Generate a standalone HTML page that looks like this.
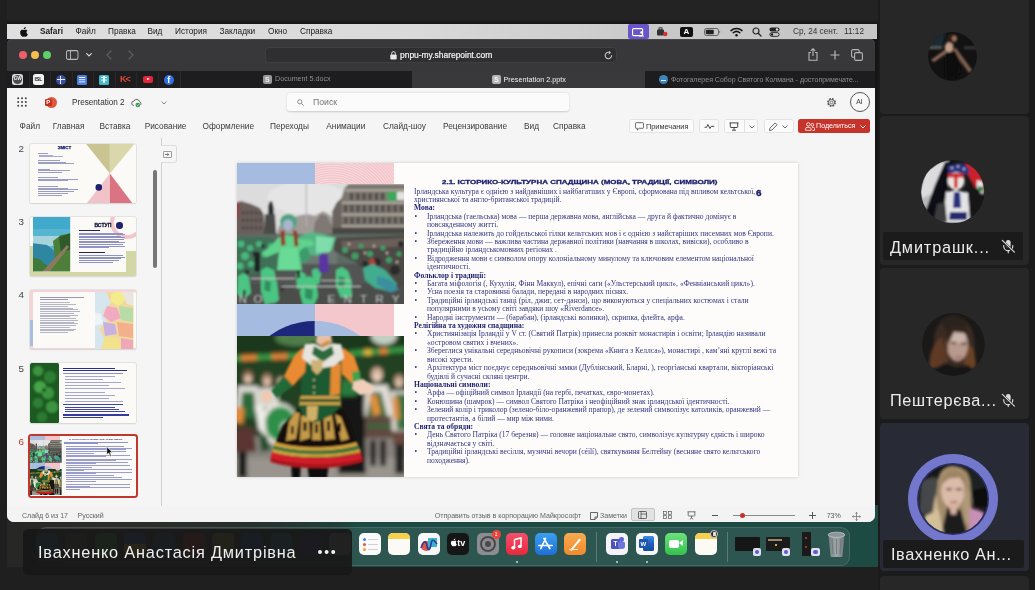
<!DOCTYPE html>
<html lang="uk">
<head>
<meta charset="utf-8">
<title>Presentation 2.pptx</title>
<style>
*{box-sizing:border-box;margin:0;padding:0}
html,body{width:1035px;height:590px;overflow:hidden;background:#1f1f1f}
body{font-family:"Liberation Sans",sans-serif;position:relative}
.a{position:absolute}
.t{position:absolute;white-space:nowrap;line-height:1}
#share{will-change:transform;border-radius:.01px}
/* ---------- shared screen ---------- */
#share{left:7px;top:0;width:871px;height:567px;background:#151515;overflow:hidden}
#menubar{left:0;top:24px;width:870px;height:14.600px;background:linear-gradient(90deg,#dfdfdf 0,#dadada 45%,#c9c9c9 75%,#c6c6c6 100%)}
#menubar .t{font-size:8.250px;color:#1a1a1a;top:4.200px}
#toolbar{left:0;top:39px;width:868px;height:32px;background:#38383a;box-shadow:inset 0 1px 0 #47474a;border-radius:5px 5px 0 0}
#tabs{left:0;top:71px;width:868px;height:17px;background:#1d1d1f}
#ppt{z-index:2;left:0;top:88px;width:868px;height:434px;background:#f5f5f5;border-radius:0 0 7px 7px;overflow:hidden}
#desk{left:0;top:505px;width:871px;height:62px;background:linear-gradient(90deg,#262624 0,#2a2b28 60px,#27302c 240px,#1f3f3a 330px,#1e4a44 352px,#1e4a44 100%)}
#desk>*{margin-top:17px}
.rt{font-size:8.300px;color:#3b3b3b}
.btn{top:31.400px;height:13.300px;background:#fbfbfb;border:1px solid #e3e3e3;border-radius:2.500px}
.sn{left:11.500px;font-size:9.800px;color:#444}
.st{top:424px;font-size:7.050px;color:#666}
.th{position:absolute;left:23.400px;width:106px;height:59.700px;background:#fbfaf6;overflow:hidden;box-shadow:0 0 0 .6px #d8d8d8,0 .5px 1.500px rgba(0,0,0,.12);border-radius:1.500px}
/* ---------- slide text ---------- */
#slide{left:230px;top:75px;width:560.500px;height:314px;background:#fdfcfb;box-shadow:0 0 3px rgba(0,0,0,.18);overflow:hidden}
.ln{position:absolute;left:177px;white-space:nowrap;font-family:"Liberation Serif",serif;font-size:7.57px;line-height:8.41px;color:#33367f}
.ln b{color:#1c1f6e}
.bl,.cl{left:190px}
.bl:before{content:"•";position:absolute;left:-12.500px}
/* ---------- right panel ---------- */
.tile{position:absolute;left:880px;width:148.800px;background:#272727;border-radius:4px}
.nm{position:absolute;white-space:nowrap;color:#ededed;font-size:16.300px;letter-spacing:.6px;line-height:1;will-change:transform}
.di{position:absolute;top:10.800px;width:22px;height:22px;border-radius:5px;overflow:hidden}
i.a{display:block}
</style>
</head>
<body>

<!-- ================= SHARED SCREEN ================= -->
<div id="share" class="a">
  <div class="a" style="left:0;top:0;width:871px;height:24px;background:linear-gradient(#232323 0,#232323 19px,#171717 23px)"></div>

  <!-- macOS menu bar -->
  <div id="menubar" class="a">
    <svg class="a" style="left:12px;top:2.5px" width="9" height="10" viewBox="0 0 18 20"><path d="M12.6 3.2c.8-1 1.3-2.300 1.200-3.200-1.100.1-2.500.8-3.300 1.700-.7.800-1.400 2.100-1.200 3.300 1.300.1 2.500-.700 3.300-1.800zM15 10.600c0-2.300 1.900-3.400 2-3.500-1.100-1.600-2.800-1.800-3.400-1.800-1.400-.2-2.800.800-3.500.800-.8 0-1.900-.800-3.100-.800-1.600 0-3.100.900-3.900 2.400-1.700 2.900-.4 7.200 1.200 9.500.800 1.200 1.700 2.500 3 2.400 1.200 0 1.700-.800 3.100-.800 1.500 0 1.900.800 3.100.700 1.300 0 2.100-1.100 2.900-2.300.900-1.300 1.300-2.600 1.300-2.700-.100 0-2.600-1-2.700-3.900z" fill="#111"/></svg>
    <span class="t" style="left:33px;font-weight:bold">Safari</span>
    <span class="t" style="left:68.5px">Файл</span>
    <span class="t" style="left:101px">Правка</span>
    <span class="t" style="left:140.500px">Вид</span>
    <span class="t" style="left:168px">История</span>
    <span class="t" style="left:212.500px">Закладки</span>
    <span class="t" style="left:261px">Окно</span>
    <span class="t" style="left:293px">Справка</span>
    <!-- right status items -->
    <div class="a" style="left:621px;top:0;width:21px;height:15px;background:#6a55c8;border-radius:2px"></div>
    <svg class="a" style="left:625px;top:3.5px" width="13" height="9" viewBox="0 0 13 9"><rect x=".6" y=".6" width="10" height="7" rx="1" fill="none" stroke="#fff" stroke-width="1.100"/><circle cx="9.5" cy="4.5" r="1.300" fill="#fff"/><path d="M7 8.500c0-2 5-2 5 0z" fill="#fff"/></svg>
    <svg class="a" style="left:649px;top:3px" width="12" height="10" viewBox="0 0 12 10"><rect x="1" y="2.500" width="7" height="6" rx="1" fill="#333"/><rect x="3" y=".8" width="3" height="2" fill="none" stroke="#333" stroke-width=".9"/><circle cx="9.300" cy="7" r="2.200" fill="#d8332f"/></svg>
    <div class="a" style="left:673px;top:2.500px;width:13px;height:10px;background:#111;border-radius:2px"></div>
    <span class="t" style="left:676.500px;top:3.500px;font-size:8px;font-weight:bold;color:#fff">A</span>
    <svg class="a" style="left:697px;top:4px" width="17" height="8" viewBox="0 0 17 8"><rect x=".5" y=".5" width="14" height="7" rx="2" fill="none" stroke="#555" stroke-width=".9"/><rect x="1.800" y="1.800" width="8" height="4.400" rx="1" fill="#222"/><path d="M15.500 2.600v2.800c.9-.3.9-2.500 0-2.800z" fill="#555"/></svg>
    <svg class="a" style="left:723px;top:3px" width="13" height="10" viewBox="0 0 13 10"><path d="M1 3.600a8 8 0 0 1 11 0" fill="none" stroke="#111" stroke-width="1.500" stroke-linecap="round"/><path d="M3.200 5.800a5 5 0 0 1 6.600 0" fill="none" stroke="#111" stroke-width="1.500" stroke-linecap="round"/><circle cx="6.500" cy="8.200" r="1.200" fill="#111"/></svg>
    <svg class="a" style="left:745px;top:3px" width="10" height="10" viewBox="0 0 10 10"><circle cx="4" cy="4" r="3" fill="none" stroke="#222" stroke-width="1.200"/><path d="M6.300 6.300L9 9" stroke="#222" stroke-width="1.300" stroke-linecap="round"/></svg>
    <svg class="a" style="left:762px;top:3px" width="11" height="10" viewBox="0 0 11 10"><rect x=".5" y=".5" width="10" height="4" rx="2" fill="#222"/><circle cx="8" cy="2.500" r="1.200" fill="#ddd"/><rect x=".9" y="5.600" width="9.200" height="3.800" rx="1.900" fill="none" stroke="#222" stroke-width=".9"/><circle cx="3" cy="7.500" r="1.200" fill="#222"/></svg>
    <span class="t" style="left:786px;color:#333">Ср, 24 сент.</span>
    <span class="t" style="left:837px;color:#333">11:12</span>
  </div>

  <!-- Safari toolbar -->
  <div id="toolbar" class="a">
    <div class="a" style="left:11.600px;top:11.700px;width:8.600px;height:8.600px;border-radius:50%;background:#ee5f6a"></div>
    <div class="a" style="left:23.700px;top:11.700px;width:8.600px;height:8.600px;border-radius:50%;background:#f3bd50"></div>
    <div class="a" style="left:35.700px;top:11.700px;width:8.600px;height:8.600px;border-radius:50%;background:#5fd068"></div>
    <svg class="a" style="left:59px;top:11px" width="12.500" height="10" viewBox="0 0 14 10" preserveAspectRatio="none"><rect x=".6" y=".6" width="12.800" height="8.800" rx="1.600" fill="none" stroke="#b9b9bb" stroke-width="1.100"/><path d="M5 .6v8.800" stroke="#b9b9bb" stroke-width="1"/></svg>
    <svg class="a" style="left:79px;top:14px" width="6" height="4" viewBox="0 0 6 4"><path d="M.7.700L3 3l2.300-2.300" fill="none" stroke="#d8d8da" stroke-width="1.200" stroke-linecap="round"/></svg>
    <svg class="a" style="left:99px;top:11px" width="6" height="10" viewBox="0 0 6 10"><path d="M5 1L1 5l4 4" fill="none" stroke="#5b5b5e" stroke-width="1.300" stroke-linecap="round"/></svg>
    <svg class="a" style="left:121px;top:11px" width="6" height="10" viewBox="0 0 6 10"><path d="M1 1l4 4-4 4" fill="none" stroke="#5b5b5e" stroke-width="1.300" stroke-linecap="round"/></svg>
    <!-- address field -->
    <div class="a" style="left:258px;top:8px;width:352px;height:16px;border-radius:4px;background:#2f2f31;border:1px solid #3e3e40"></div>
    <svg class="a" style="left:383px;top:12px" width="7" height="9" viewBox="0 0 7 9"><rect x=".3" y="3.600" width="6.400" height="5" rx="1" fill="#e8e8ea"/><path d="M1.700 3.800V2.400a1.800 1.800 0 0 1 3.600 0v1.400" fill="none" stroke="#e8e8ea" stroke-width="1"/></svg>
    <span class="t" style="left:393px;top:11.700px;font-size:8.450px;color:#f2f2f4;-webkit-text-stroke:.2px #f2f2f4">pnpu-my.sharepoint.com</span>
    <svg class="a" style="left:597px;top:11.500px" width="9" height="9" viewBox="0 0 9 9"><path d="M7.600 4.500A3.200 3.200 0 1 1 5.800 1.600" fill="none" stroke="#c6c6c8" stroke-width="1.100" stroke-linecap="round"/><path d="M4.800 0l1.700 1.700L4.600 3.200" fill="none" stroke="#c6c6c8" stroke-width="1"/></svg>
    <!-- right icons -->
    <svg class="a" style="left:801px;top:9px" width="10" height="13" viewBox="0 0 10 13"><path d="M3 4.500H1v7.800h8V4.500H7" fill="none" stroke="#b6b6b9" stroke-width="1.100"/><path d="M5 8V.8M2.800 2.800L5 .7l2.200 2.100" fill="none" stroke="#b6b6b9" stroke-width="1.100"/></svg>
    <svg class="a" style="left:823px;top:11px" width="10" height="10" viewBox="0 0 10 10"><path d="M5 .5v9M.5 5h9" stroke="#b6b6b9" stroke-width="1.200"/></svg>
    <svg class="a" style="left:844px;top:10px" width="12" height="12" viewBox="0 0 12 12"><rect x=".6" y=".6" width="7.600" height="7.600" rx="1.500" fill="none" stroke="#b6b6b9" stroke-width="1.100"/><rect x="3.600" y="3.600" width="7.800" height="7.800" rx="1.500" fill="#38383a" stroke="#b6b6b9" stroke-width="1.100"/></svg>
  </div>

  <!-- Safari tab bar -->
  <div id="tabs" class="a">
    <div class="a" style="left:405px;top:0;width:233px;height:17px;background:#39393b"></div>
    <div class="a" style="left:173px;top:0;width:1px;height:17px;background:#2c2c2e"></div>
    <!-- pinned favicons -->
    <div class="a" style="left:21.8px;top:1px;width:1px;height:15px;background:#2b2725"></div><div class="a" style="left:43.3px;top:1px;width:1px;height:15px;background:#2b2725"></div><div class="a" style="left:64.8px;top:1px;width:1px;height:15px;background:#2b2725"></div><div class="a" style="left:86.3px;top:1px;width:1px;height:15px;background:#2b2725"></div><div class="a" style="left:107.8px;top:1px;width:1px;height:15px;background:#2b2725"></div><div class="a" style="left:129.3px;top:1px;width:1px;height:15px;background:#2b2725"></div><div class="a" style="left:150.8px;top:1px;width:1px;height:15px;background:#2b2725"></div>
    <div class="a" style="left:5px;top:3px;width:11px;height:11px;border-radius:2.500px;background:#d9dadc"></div>
    <div class="a" style="left:6px;top:4px;width:9px;height:9px;border-radius:50%;background:#4a4c50"></div><span class="t" style="left:6.800px;top:6.300px;font-size:4.600px;font-weight:bold;color:#f0f0f0">GW</span>
    <div class="a" style="left:26px;top:3px;width:11px;height:11px;border-radius:2.500px;background:#f2f2f2"></div>
    <span class="t" style="left:27.500px;top:6px;font-size:5px;font-weight:bold;color:#111">ISL</span>
    <div class="a" style="left:48.500px;top:3.500px;width:10px;height:10px;border-radius:50%;background:#3b4ea6"></div>
    <div class="a" style="left:52.800px;top:4.500px;width:1.400px;height:8px;background:#e8ecff"></div>
    <div class="a" style="left:49.500px;top:7.800px;width:8px;height:1.400px;background:#e8ecff"></div>
    <div class="a" style="left:70px;top:3.500px;width:10px;height:10px;border-radius:1.500px;background:#4d7fe0"></div>
    <div class="a" style="left:72px;top:5.800px;width:6px;height:1.200px;background:#e6eeff;box-shadow:0 2.200px #e6eeff,0 4.400px #e6eeff"></div>
    <div class="a" style="left:92px;top:3.500px;width:10px;height:10px;border-radius:1.500px;background:#3fb9c9"></div>
    <div class="a" style="left:94px;top:5.800px;width:6px;height:1.300px;background:#e9fbff;box-shadow:0 2.600px #e9fbff"></div>
    <div class="a" style="left:96.400px;top:5px;width:1.200px;height:7px;background:#e9fbff"></div>
    <span class="t" style="left:113px;top:4px;font-size:9px;font-weight:bold;color:#e2482f;letter-spacing:-1px">K&lt;</span>
    <div class="a" style="left:136px;top:5px;width:10px;height:7px;border-radius:2px;background:#e0263c"></div>
    <div class="a" style="left:139.800px;top:6.700px;border-left:3.200px solid #fff;border-top:1.800px solid transparent;border-bottom:1.800px solid transparent"></div>
    <div class="a" style="left:157px;top:3.500px;width:10px;height:10px;border-radius:50%;background:#2f6fdf"></div>
    <span class="t" style="left:160.200px;top:4.500px;font-size:9px;font-weight:bold;color:#fff">f</span>
    <!-- tab 1 -->
    <div class="a" style="left:255.500px;top:3.800px;width:9.500px;height:9.500px;border-radius:2px;background:#98989b"></div>
    <span class="t" style="left:257.900px;top:5.100px;font-size:7px;font-weight:bold;color:#ececec">S</span>
    <span class="t" style="left:268px;top:5px;font-size:7.150px;color:#8e8e92">Document 5.docx</span>
    <!-- tab 2 (active) -->
    <div class="a" style="left:484.500px;top:3.800px;width:9.500px;height:9.500px;border-radius:2px;background:#b4b4b7"></div>
    <span class="t" style="left:486.900px;top:5.100px;font-size:7px;font-weight:bold;color:#f6f6f6">S</span>
    <span class="t" style="left:496.500px;top:5px;font-size:7.250px;color:#f0f0f2">Presentation 2.pptx</span>
    <!-- tab 3 -->
    <div class="a" style="left:652px;top:4px;width:9px;height:9px;border-radius:50%;background:#3f86b8"></div>
    <div class="a" style="left:654px;top:8.500px;width:5px;height:1.200px;background:#dfeefa"></div>
    <span class="t" style="left:664px;top:5px;font-size:7px;color:#8e8e92">Фотогалерея Собор Святого Колмана - достопримечате...</span>
  </div>

  <!-- ===== PowerPoint window ===== -->
  <div id="ppt" class="a">
    <!-- header -->
    <svg class="a" style="left:10px;top:9px" width="10" height="10" viewBox="0 0 10 10" fill="#444"><circle cx="1.200" cy="1.200" r="1"/><circle cx="5" cy="1.200" r="1"/><circle cx="8.800" cy="1.200" r="1"/><circle cx="1.200" cy="5" r="1"/><circle cx="5" cy="5" r="1"/><circle cx="8.800" cy="5" r="1"/><circle cx="1.200" cy="8.800" r="1"/><circle cx="5" cy="8.800" r="1"/><circle cx="8.800" cy="8.800" r="1"/></svg>
    <div class="a" style="left:39px;top:8.500px;width:11px;height:11px;border-radius:50%;background:#e0563f"></div>
    <div class="a" style="left:37.500px;top:10.500px;width:7px;height:7px;border-radius:1.300px;background:#c2331f"></div>
    <span class="t" style="left:39.200px;top:11px;font-size:6px;font-weight:bold;color:#fff">P</span>
    <span class="t" style="left:65px;top:9.600px;font-size:8.900px;color:#2f2f2f;transform:scaleX(.92);transform-origin:0 50%">Presentation 2</span>
    <svg class="a" style="left:124px;top:9.500px" width="11" height="10" viewBox="0 0 11 10"><path d="M2.800 7.500a2.200 2.200 0 0 1 .2-4.400 2.900 2.900 0 0 1 5.500.6 1.900 1.900 0 0 1 .5 3.500" fill="none" stroke="#555" stroke-width=".9"/><circle cx="6.800" cy="7" r="2.300" fill="#2e9e55"/><path d="M5.700 7l.8.800 1.400-1.500" fill="none" stroke="#fff" stroke-width=".7"/></svg>
    <svg class="a" style="left:153.800px;top:12.500px" width="6" height="4" viewBox="0 0 6 4"><path d="M.6.600L3 3 5.400.6" fill="none" stroke="#777" stroke-width=".9"/></svg>
    <div class="a" style="left:280px;top:4.500px;width:282px;height:18.500px;background:#fbfbfb;border-radius:3px;box-shadow:0 .5px 2px rgba(0,0,0,.18)"></div>
    <svg class="a" style="left:290px;top:10.500px" width="7" height="7" viewBox="0 0 7 7"><circle cx="2.800" cy="2.800" r="2.100" fill="none" stroke="#777" stroke-width=".8"/><path d="M4.400 4.400L6.500 6.500" stroke="#777" stroke-width=".8"/></svg>
    <span class="t" style="left:306px;top:9.800px;font-size:8.700px;color:#767676">Поиск</span>
    <svg class="a" style="left:818.500px;top:8.500px" width="11" height="11" viewBox="0 0 11 11"><circle cx="5.500" cy="5.500" r="3.600" fill="none" stroke="#5a5a5a" stroke-width="1.700" stroke-dasharray="1.700 1.130"/><circle cx="5.500" cy="5.500" r="3" fill="none" stroke="#5a5a5a" stroke-width=".8"/><circle cx="5.500" cy="5.500" r="1.300" fill="none" stroke="#5a5a5a" stroke-width=".8"/></svg>
    <div class="a" style="left:843px;top:4px;width:20px;height:20px;border-radius:50%;border:1px solid #555;background:#f8f8f8"></div>
    <span class="t" style="left:849.300px;top:10.800px;font-size:6.800px;color:#333">AI</span>

    <!-- ribbon tabs -->
    <span class="t rt" style="left:12.6px;top:33.900px">Файл</span>
    <span class="t rt" style="left:45.8px;top:33.900px">Главная</span>
    <span class="t rt" style="left:92.5px;top:33.900px">Вставка</span>
    <span class="t rt" style="left:137.7px;top:33.900px">Рисование</span>
    <span class="t rt" style="left:195.5px;top:33.900px">Оформление</span>
    <span class="t rt" style="left:263.0px;top:33.900px">Переходы</span>
    <span class="t rt" style="left:319.3px;top:33.900px">Анимации</span>
    <span class="t rt" style="left:376.0px;top:33.900px">Слайд-шоу</span>
    <span class="t rt" style="left:436.0px;top:33.900px">Рецензирование</span>
    <span class="t rt" style="left:517.0px;top:33.900px">Вид</span>
    <span class="t rt" style="left:546.0px;top:33.900px">Справка</span>

    <!-- ribbon buttons -->
    <div class="a btn" style="left:622px;width:64.500px"></div>
    <svg class="a" style="left:627.500px;top:34px" width="9" height="9" viewBox="0 0 9 9"><path d="M1.200.7h6.600a.8.800 0 0 1 .8.800v4a.8.800 0 0 1-.8.800H4.200L2.300 8V6.300H1.200a.8.800 0 0 1-.8-.8v-4a.8.800 0 0 1 .8-.8z" fill="none" stroke="#444" stroke-width=".8"/></svg>
    <span class="t" style="left:639px;top:34.500px;font-size:7.350px;color:#333">Примечания</span>
    <div class="a btn" style="left:691.700px;width:20.500px"></div>
    <svg class="a" style="left:696.500px;top:35px" width="11" height="7" viewBox="0 0 11 7"><path d="M.6 4.300h2l1.300-2.800 2 4 1.400-2.200h3" fill="none" stroke="#333" stroke-width=".9" stroke-linejoin="round"/></svg>
    <div class="a btn" style="left:717px;width:34px"></div>
    <div class="a" style="left:737px;top:31.400px;width:1px;height:13.300px;background:#e0e0e0"></div>
    <svg class="a" style="left:722px;top:33.800px" width="10" height="9" viewBox="0 0 10 9"><path d="M.5.900h9M1.300.9v3.900a.7.700 0 0 0 .7.700h6a.7.700 0 0 0 .7-.7V.9M5 5.500v2.300M3 8.200h4" fill="none" stroke="#333" stroke-width=".9"/></svg>
    <svg class="a" style="left:741.500px;top:36.500px" width="6" height="4" viewBox="0 0 6 4"><path d="M.5.500L3 3 5.500.5" fill="none" stroke="#444" stroke-width=".8"/></svg>
    <div class="a btn" style="left:757px;width:29.500px"></div>
    <svg class="a" style="left:761.500px;top:33.500px" width="9" height="9" viewBox="0 0 9 9"><path d="M6.200.9l1.900 1.900-5.300 5.300-2.300.5.400-2.400z" fill="none" stroke="#444" stroke-width=".8" stroke-linejoin="round"/></svg>
    <svg class="a" style="left:774.500px;top:36.500px" width="6" height="4" viewBox="0 0 6 4"><path d="M.5.500L3 3 5.500.5" fill="none" stroke="#444" stroke-width=".8"/></svg>
    <div class="a" style="left:791.400px;top:31px;width:71.600px;height:14px;border-radius:2.500px;background:#c5332a"></div>
    <svg class="a" style="left:797.500px;top:33.800px" width="10" height="9" viewBox="0 0 10 9"><circle cx="3.300" cy="2.400" r="1.700" fill="none" stroke="#fff" stroke-width=".8"/><circle cx="7.300" cy="2.800" r="1.400" fill="none" stroke="#fff" stroke-width=".8"/><path d="M.5 8.300V7a1.600 1.600 0 0 1 1.600-1.600h2.400A1.600 1.600 0 0 1 6.100 7v1.300zM7 5.400h1.300A1.300 1.300 0 0 1 9.600 6.700v1.600H7.500" fill="none" stroke="#fff" stroke-width=".8"/></svg>
    <span class="t" style="left:809.100px;top:34.700px;font-size:7.100px;color:#fff">Поделиться</span>
    <svg class="a" style="left:853px;top:36.500px" width="6" height="4" viewBox="0 0 6 4"><path d="M.5.500L3 3 5.500.5" fill="none" stroke="#fff" stroke-width=".9"/></svg>

    <!-- thumbnail panel -->
    <div class="a" style="left:153.800px;top:50px;width:1.300px;height:368px;background:#d0d0d0"></div>
    <div class="a" style="left:154px;top:57px;width:15.500px;height:18px;border:1px solid #dcdcdc;border-left:none;border-radius:0 3px 3px 0;background:#f6f6f6"></div>
    <svg class="a" style="left:155.500px;top:62.500px" width="9" height="7" viewBox="0 0 9 7"><rect x=".4" y=".4" width="8.200" height="6.200" rx=".8" fill="none" stroke="#666" stroke-width=".7"/><path d="M2 3.500h3.600M4.300 2.200l1.500 1.300-1.500 1.300" fill="none" stroke="#444" stroke-width=".7"/></svg>
    <div class="a" style="left:146.300px;top:81.500px;width:3.400px;height:98px;border-radius:2px;background:#767676"></div>
    <span class="t sn" style="top:56px">2</span>
    <span class="t sn" style="top:129px">3</span>
    <span class="t sn" style="top:202px">4</span>
    <span class="t sn" style="top:275.500px">5</span>
    <span class="t sn" style="top:348.500px;color:#c0392b">6</span>
    <div class="th" id="t2" style="top:55.600px"><svg class="a" style="left:0;top:0" width="106" height="60" viewBox="0 0 106 60"><path d="M56.200 0H79.900V29.600z" fill="#c9c492"/><path d="M79.900 0H104.400L79.900 29.600z" fill="#dad7ac"/><path d="M79.900 29.600L56.200 60H79.900z" fill="#f1c3c8"/><path d="M79.900 29.600L103 60H79.900z" fill="#da7482"/><circle cx="68.800" cy="43.400" r="3.300" fill="#1d226f"/></svg>
<span class="t" style="left:27.300px;top:2.500px;font-size:4.400px;font-weight:bold;color:#1d226f;-webkit-text-stroke:.25px #1d226f">ЗМІСТ</span><i class="a" style="left:8px;top:9.5px;width:10px;height:0.7px;background:#9a9dc4"></i><i class="a" style="left:9px;top:11.3px;width:14px;height:0.7px;background:#a9acd0"></i><i class="a" style="left:9px;top:12.9px;width:24px;height:0.7px;background:#a9acd0"></i><i class="a" style="left:8px;top:16.5px;width:22px;height:0.7px;background:#9a9dc4"></i><i class="a" style="left:8px;top:18.2px;width:28px;height:0.7px;background:#9a9dc4"></i><i class="a" style="left:8px;top:19.9px;width:36px;height:0.7px;background:#9a9dc4"></i><i class="a" style="left:8px;top:25.0px;width:12px;height:0.7px;background:#9a9dc4"></i><i class="a" style="left:8px;top:26.7px;width:32px;height:0.7px;background:#9a9dc4"></i><i class="a" style="left:8px;top:28.4px;width:24px;height:0.7px;background:#9a9dc4"></i><i class="a" style="left:8px;top:33.5px;width:20px;height:0.7px;background:#9a9dc4"></i><i class="a" style="left:8px;top:35.2px;width:40px;height:0.7px;background:#9a9dc4"></i><i class="a" style="left:8px;top:36.9px;width:30px;height:0.7px;background:#9a9dc4"></i><i class="a" style="left:8px;top:42.5px;width:20px;height:0.7px;background:#9a9dc4"></i><i class="a" style="left:8px;top:44.2px;width:30px;height:0.7px;background:#9a9dc4"></i><i class="a" style="left:8px;top:45.9px;width:40px;height:0.7px;background:#9a9dc4"></i><i class="a" style="left:8px;top:47.6px;width:36px;height:0.7px;background:#9a9dc4"></i><i class="a" style="left:8px;top:49.3px;width:30px;height:0.7px;background:#9a9dc4"></i><i class="a" style="left:8px;top:51.0px;width:24px;height:0.7px;background:#9a9dc4"></i></div>
    <div class="th" id="t3" style="top:128.500px"><div class="a" style="left:0;top:29px;width:4px;height:31px;background:#d3d7a5"></div><div class="a" style="left:0;top:55.200px;width:106px;height:5px;background:#d3d7a5"></div><div class="a" style="left:96px;top:34px;width:10px;height:26px;background:#d3d7a5"></div>
<div class="a" style="left:80px;top:-12px;width:34px;height:34px;border-radius:50%;border:4.800px solid #f3c5cb"></div>
<svg class="a" style="left:3.100px;top:.7px" width="37.200" height="54.500" viewBox="0 0 37.200 54.500"><defs><filter id="bt3"><feGaussianBlur stdDeviation=".6"/></filter><clipPath id="ct3"><rect width="37.200" height="54.500"/></clipPath></defs><g clip-path="url(#ct3)"><g filter="url(#bt3)"><rect x="-2" y="-2" width="42" height="60" fill="#57b6d0"/><rect x="-2" y="-2" width="42" height="14" fill="#3fa9cc"/><rect x="-2" y="19" width="42" height="10" fill="#a7d3dd"/><path d="M-2 26l16 2 10 8 6 22H-2z" fill="#2e86a3"/><path d="M20 24l8-6 12-2v42H14l8-16z" fill="#4d7f3a"/><path d="M26 20l12-4v16l-10 4z" fill="#2f5a2a"/><path d="M-2 40l8 2 10 8 2 8H-2z" fill="#3f7a3a"/><path d="M8 56L34 28l2 2L14 58z" fill="#8c7a5c"/></g></g></svg>
<div class="a" style="left:85.700px;top:5.700px;width:6.600px;height:6.600px;border-radius:50%;background:#1d226f"></div>
<span class="t" style="left:64px;top:6.300px;font-size:5.100px;font-weight:bold;color:#15183f;-webkit-text-stroke:.3px #15183f">ВСТУП</span><i class="a" style="left:49px;top:13.2px;width:21px;height:1.1px;background:#22264f"></i><i class="a" style="left:49px;top:16.0px;width:44px;height:0.8px;background:#8f93c4"></i><i class="a" style="left:49px;top:17.6px;width:46px;height:0.8px;background:#8f93c4"></i><i class="a" style="left:49px;top:19.3px;width:42px;height:0.8px;background:#8f93c4"></i><i class="a" style="left:49px;top:20.9px;width:46px;height:0.8px;background:#8f93c4"></i><i class="a" style="left:49px;top:22.6px;width:45px;height:0.8px;background:#8f93c4"></i><i class="a" style="left:49px;top:24.2px;width:40px;height:0.8px;background:#8f93c4"></i><i class="a" style="left:49px;top:25.9px;width:46px;height:0.8px;background:#8f93c4"></i><i class="a" style="left:49px;top:27.5px;width:44px;height:0.8px;background:#8f93c4"></i><i class="a" style="left:49px;top:29.2px;width:46px;height:0.8px;background:#8f93c4"></i><i class="a" style="left:49px;top:30.9px;width:30px;height:0.8px;background:#8f93c4"></i><i class="a" style="left:49px;top:35.0px;width:26px;height:1.1px;background:#22264f"></i><i class="a" style="left:49px;top:38.5px;width:44px;height:0.8px;background:#8f93c4"></i><i class="a" style="left:49px;top:40.1px;width:46px;height:0.8px;background:#8f93c4"></i><i class="a" style="left:49px;top:41.8px;width:42px;height:0.8px;background:#8f93c4"></i><i class="a" style="left:49px;top:43.5px;width:40px;height:0.8px;background:#8f93c4"></i><i class="a" style="left:49px;top:45.1px;width:34px;height:0.8px;background:#8f93c4"></i></div>
    <div class="th" id="t4" style="top:201.800px"><div class="a" style="left:0;top:0;width:106px;height:60px;background:#f6d3d7"></div><div class="a" style="left:0;top:30px;width:2.500px;height:26px;background:#a9bddf"></div><div class="a" style="left:2.500px;top:2.500px;width:103.500px;height:56px;background:#fbfaf6;border-radius:1.500px"></div>
<svg class="a" style="left:64.700px;top:2.500px" width="38.500" height="57" viewBox="0 0 38.500 57"><defs><filter id="bt4"><feGaussianBlur stdDeviation=".7"/></filter><clipPath id="ct4"><rect width="38.500" height="57"/></clipPath></defs><g clip-path="url(#ct4)"><g filter="url(#bt4)"><rect x="-2" y="-2" width="43" height="61" fill="#d6e6ef"/><path d="M10 -2h30v61H6l4-12-6-10 8-8-4-10 8-8z" fill="#efd9a0"/><path d="M16 2l10-4 6 8-8 8-8-4z" fill="#f4ec8c"/><path d="M26 -2h14v16l-8-2z" fill="#e9e6e0"/><path d="M12 14l10 2 4 10-10 4-8-6z" fill="#f2a9c2"/><path d="M24 14l14 2v14l-12-2z" fill="#b8dca8"/><path d="M8 30l12 2 2 10-12 2z" fill="#c9b0e2"/><path d="M22 30l16 2v14l-14-2z" fill="#f3b08c"/><path d="M10 44l14 2 2 12H6z" fill="#f2e28c"/><path d="M26 46l12 2v10H26z" fill="#f0a8b8"/><path d="M-2 20l8 2 2 10-10 2z" fill="#eef3f6"/></g></g></svg><i class="a" style="left:10px;top:7.5px;width:44px;height:0.8px;background:#9698b2"></i><i class="a" style="left:10px;top:9.2px;width:28px;height:0.8px;background:#9698b2"></i><i class="a" style="left:10px;top:12.5px;width:30px;height:0.8px;background:#b4b5c6"></i><i class="a" style="left:10px;top:14.2px;width:36px;height:0.8px;background:#b4b5c6"></i><i class="a" style="left:10px;top:16.0px;width:28px;height:0.8px;background:#b4b5c6"></i><i class="a" style="left:10px;top:17.8px;width:33px;height:0.8px;background:#b4b5c6"></i><i class="a" style="left:10px;top:19.5px;width:38px;height:0.8px;background:#b4b5c6"></i><i class="a" style="left:10px;top:21.2px;width:40px;height:0.8px;background:#b4b5c6"></i><i class="a" style="left:10px;top:23.0px;width:34px;height:0.8px;background:#b4b5c6"></i><i class="a" style="left:10px;top:24.8px;width:38px;height:0.8px;background:#b4b5c6"></i><i class="a" style="left:10px;top:26.5px;width:30px;height:0.8px;background:#b4b5c6"></i><i class="a" style="left:10px;top:28.2px;width:36px;height:0.8px;background:#b4b5c6"></i><i class="a" style="left:10px;top:30.0px;width:38px;height:0.8px;background:#b4b5c6"></i><i class="a" style="left:10px;top:31.8px;width:34px;height:0.8px;background:#b4b5c6"></i><i class="a" style="left:10px;top:33.5px;width:38px;height:0.8px;background:#b4b5c6"></i><i class="a" style="left:10px;top:35.2px;width:36px;height:0.8px;background:#b4b5c6"></i><i class="a" style="left:10px;top:37.0px;width:30px;height:0.8px;background:#b4b5c6"></i><i class="a" style="left:10px;top:38.8px;width:36px;height:0.8px;background:#b4b5c6"></i><i class="a" style="left:10px;top:40.5px;width:34px;height:0.8px;background:#b4b5c6"></i><i class="a" style="left:10px;top:42.2px;width:28px;height:0.8px;background:#b4b5c6"></i></div>
    <div class="th" id="t5" style="top:275px"><svg class="a" style="left:0;top:0" width="29" height="60" viewBox="0 0 29 60"><defs><filter id="bt5"><feGaussianBlur stdDeviation=".8"/></filter><clipPath id="ct5"><rect width="29" height="60" rx="1.500"/></clipPath></defs><g clip-path="url(#ct5)"><g filter="url(#bt5)"><rect x="-2" y="-2" width="33" height="64" fill="#1f5a22"/><circle cx="8" cy="8" r="5" fill="#3c9440"/><circle cx="20" cy="14" r="6" fill="#2f7f34"/><circle cx="10" cy="24" r="6" fill="#46a44a"/><circle cx="18" cy="30" r="6" fill="#3a9440"/><circle cx="8" cy="40" r="5" fill="#2f7f34"/><circle cx="22" cy="44" r="6" fill="#3c9440"/><circle cx="12" cy="54" r="5" fill="#2c7a30"/><circle cx="14" cy="27" r="2" fill="#1a4d1e"/></g></g></svg><i class="a" style="left:33px;top:5.0px;width:52px;height:1.0px;background:#2a2f8a"></i><i class="a" style="left:33px;top:6.7px;width:64px;height:1.0px;background:#2a2f8a"></i><i class="a" style="left:33px;top:10.0px;width:60px;height:0.7px;background:#8d90b8"></i><i class="a" style="left:35px;top:13.0px;width:50px;height:0.8px;background:#a3a7d2"></i><i class="a" style="left:35px;top:16.1px;width:38px;height:0.8px;background:#a3a7d2"></i><i class="a" style="left:35px;top:19.2px;width:56px;height:0.8px;background:#a3a7d2"></i><i class="a" style="left:35px;top:22.3px;width:44px;height:0.8px;background:#a3a7d2"></i><i class="a" style="left:35px;top:25.4px;width:60px;height:0.8px;background:#a3a7d2"></i><i class="a" style="left:35px;top:28.5px;width:40px;height:0.8px;background:#a3a7d2"></i><i class="a" style="left:35px;top:31.6px;width:50px;height:0.8px;background:#a3a7d2"></i><i class="a" style="left:35px;top:34.7px;width:44px;height:0.8px;background:#a3a7d2"></i><i class="a" style="left:35px;top:37.8px;width:58px;height:0.8px;background:#a3a7d2"></i><i class="a" style="left:33px;top:41.0px;width:60px;height:1px;background:#4146a0"></i><i class="a" style="left:35px;top:43.5px;width:50px;height:0.9px;background:#4146a0"></i><i class="a" style="left:35px;top:45.9px;width:54px;height:0.9px;background:#4146a0"></i><i class="a" style="left:35px;top:48.3px;width:60px;height:0.9px;background:#4146a0"></i><i class="a" style="left:33px;top:50.5px;width:66px;height:1.0px;background:#343aa0"></i><i class="a" style="left:33px;top:52.0px;width:66px;height:1.0px;background:#343aa0"></i><i class="a" style="left:33px;top:53.5px;width:40px;height:1.0px;background:#343aa0"></i></div>
    <div class="th" id="t6" style="top:348px;box-shadow:0 0 0 2px #c2372c;border-radius:1.500px"><div class="a" style="left:0;top:0;width:14.700px;height:34px;background:#a9bddf"></div><div class="a" style="left:14.700px;top:0;width:15px;height:34px;background:#f3c5cb"></div>
<svg class="a" style="left:0;top:4px" width="31.700" height="22.800" viewBox="0 0 167.400 120.300"><use href="#ph1"/></svg><svg class="a" style="left:0;top:32.750px" width="31.700" height="26.700" viewBox="0 0 167.500 141"><use href="#ph2"/></svg><svg class="a" style="left:0;top:26.800px" width="31.700" height="6" viewBox="0 141.700 167.400 31.600"><path d="M1.300 234.200a76.500 76.500 0 0 1 76.500-76.500v76.500z" fill="#1d277c"/><path d="M77.800 157.700a76.500 76.500 0 0 1 76.500 76.500h-76.500z" fill="#a5bce0"/></svg>
<span class="t" style="left:38.500px;top:2.600px;font-size:1.550px;font-weight:bold;color:#1b1e6b">2.1. ІСТОРИКО-КУЛЬТУРНА СПАДЩИНА (МОВА, ТРАДИЦІЇ, СИМВОЛИ)</span><i class="a" style="left:33.3px;top:5.6px;width:64px;height:0.8px;background:#8e92c8"></i><i class="a" style="left:33.3px;top:7.2px;width:34px;height:0.8px;background:#8e92c8"></i><i class="a" style="left:35.8px;top:10.0px;width:58px;height:0.8px;background:#9a9ece"></i><i class="a" style="left:35.8px;top:11.6px;width:66px;height:0.8px;background:#9a9ece"></i><i class="a" style="left:35.8px;top:13.2px;width:60px;height:0.8px;background:#9a9ece"></i><i class="a" style="left:35.8px;top:14.8px;width:60px;height:0.8px;background:#9a9ece"></i><i class="a" style="left:35.8px;top:17.0px;width:28px;height:0.8px;background:#9a9ece"></i><i class="a" style="left:35.8px;top:18.6px;width:64px;height:0.8px;background:#9a9ece"></i><i class="a" style="left:35.8px;top:20.2px;width:40px;height:0.8px;background:#9a9ece"></i><i class="a" style="left:35.8px;top:22.5px;width:66px;height:0.8px;background:#9a9ece"></i><i class="a" style="left:35.8px;top:24.1px;width:50px;height:0.8px;background:#9a9ece"></i><i class="a" style="left:35.8px;top:25.7px;width:62px;height:0.8px;background:#9a9ece"></i><i class="a" style="left:35.8px;top:27.3px;width:30px;height:0.8px;background:#9a9ece"></i><i class="a" style="left:35.8px;top:28.9px;width:64px;height:0.8px;background:#9a9ece"></i><i class="a" style="left:35.8px;top:30.5px;width:26px;height:0.8px;background:#9a9ece"></i><i class="a" style="left:35.8px;top:32.5px;width:66px;height:0.8px;background:#9a9ece"></i><i class="a" style="left:35.8px;top:34.1px;width:18px;height:0.8px;background:#9a9ece"></i><i class="a" style="left:35.8px;top:35.7px;width:66px;height:0.8px;background:#9a9ece"></i><i class="a" style="left:35.8px;top:37.3px;width:30px;height:0.8px;background:#9a9ece"></i><i class="a" style="left:35.8px;top:38.9px;width:48px;height:0.8px;background:#9a9ece"></i><i class="a" style="left:35.8px;top:40.5px;width:56px;height:0.8px;background:#9a9ece"></i><i class="a" style="left:35.8px;top:43.0px;width:66px;height:0.8px;background:#9a9ece"></i><i class="a" style="left:35.8px;top:44.6px;width:30px;height:0.8px;background:#9a9ece"></i><i class="a" style="left:35.8px;top:48.0px;width:64px;height:0.8px;background:#9a9ece"></i><i class="a" style="left:35.8px;top:49.6px;width:24px;height:0.8px;background:#9a9ece"></i><i class="a" style="left:35.8px;top:51.2px;width:64px;height:0.8px;background:#9a9ece"></i><i class="a" style="left:35.8px;top:52.8px;width:14px;height:0.8px;background:#9a9ece"></i></div>

    <!-- mouse cursor -->
    <svg class="a" style="left:98.800px;top:358px;z-index:5" width="7.500" height="11" viewBox="0 0 12 18"><path d="M1 1v13.500l3.200-2.900L6.600 17l2.200-1-2.400-5.200h4.400z" fill="#111" stroke="#fff" stroke-width="1.100" stroke-linejoin="round"/></svg>
    <!-- slide -->
    <div id="slide" class="a">

      <!-- decorative strips -->
      <div class="a" style="left:0;top:0;width:77.800px;height:176px;background:#a5bce0"></div>
      <div class="a" style="left:77.800px;top:0;width:79.200px;height:176px;background:#f3c7cc;overflow:hidden">
        <svg class="a" style="left:0;top:0" width="79.200" height="22" viewBox="0 0 79.200 22"><g fill="none" stroke="#f9e0e3" stroke-width=".75"><circle cx="17" cy="56" r="8.0"/><circle cx="17" cy="56" r="10.3"/><circle cx="17" cy="56" r="12.6"/><circle cx="17" cy="56" r="14.9"/><circle cx="17" cy="56" r="17.2"/><circle cx="17" cy="56" r="19.5"/><circle cx="17" cy="56" r="21.8"/><circle cx="17" cy="56" r="24.1"/><circle cx="17" cy="56" r="26.4"/><circle cx="17" cy="56" r="28.7"/><circle cx="17" cy="56" r="31.0"/><circle cx="17" cy="56" r="33.3"/><circle cx="17" cy="56" r="35.6"/><circle cx="17" cy="56" r="37.9"/><circle cx="17" cy="56" r="40.2"/><circle cx="17" cy="56" r="42.5"/><circle cx="17" cy="56" r="44.8"/><circle cx="17" cy="56" r="47.1"/><circle cx="17" cy="56" r="49.4"/><circle cx="17" cy="56" r="51.7"/><circle cx="17" cy="56" r="54.0"/><circle cx="17" cy="56" r="56.3"/><circle cx="17" cy="56" r="58.6"/><circle cx="17" cy="56" r="60.9"/><circle cx="17" cy="56" r="63.2"/><circle cx="17" cy="56" r="65.5"/><circle cx="17" cy="56" r="67.8"/><circle cx="17" cy="56" r="70.1"/><circle cx="17" cy="56" r="72.4"/><circle cx="17" cy="56" r="74.7"/><circle cx="17" cy="56" r="77.0"/><circle cx="17" cy="56" r="79.3"/><circle cx="17" cy="56" r="81.6"/><circle cx="17" cy="56" r="83.9"/><circle cx="17" cy="56" r="86.2"/><circle cx="17" cy="56" r="88.5"/><circle cx="17" cy="56" r="90.8"/><circle cx="17" cy="56" r="93.1"/><circle cx="17" cy="56" r="95.4"/><circle cx="17" cy="56" r="97.7"/></g></svg>
      </div>
      <svg class="a" style="left:0;top:141.700px" width="157" height="32" viewBox="0 141.700 157 32"><path d="M1.300 234.200a76.500 76.500 0 0 1 76.500-76.500v76.500z" fill="#1d277c"/><path d="M77.800 157.700a76.500 76.500 0 0 1 76.500 76.500h-76.500z" fill="#a5bce0"/></svg>

      <!-- photo 1 : St Patrick's parade -->
      <svg class="a" style="left:0;top:21.100px" width="167.400" height="120.300" viewBox="0 0 167.400 120.300">
        <defs><filter id="bl1" x="-5%" y="-5%" width="110%" height="110%"><feGaussianBlur stdDeviation=".85"/></filter>
        <clipPath id="c1"><rect width="167.400" height="120.300"/></clipPath></defs>
        <g clip-path="url(#c1)" id="ph1"><g filter="url(#bl1)">
          <rect x="-5" y="-5" width="180" height="131" fill="#dddcdd"/>
          <ellipse cx="70" cy="14" rx="40" ry="16" fill="#e6e5e6"/>
          <!-- far haze and trees -->
          <path d="M38 54l4-12 10-4 8-6 10-2 8 2 8-5 8 5 6 8v14z" fill="#a19b97"/>
          <path d="M76 52l2-14 6-8 6 2 5 10 2 10z" fill="#7f7873"/>
          <!-- left building -->
          <path d="M-2 19l6-2 10 3 9 4 4 7v24H-2z" fill="#6b5f5c"/>
          <path d="M-2 19l5-1v16h-5z" fill="#8a4a48"/>
          <g fill="#4c4442"><rect x="5.0" y="27.0" width="2.2" height="3.6"/><rect x="5.0" y="34.5" width="2.2" height="3.6"/><rect x="5.0" y="42.0" width="2.2" height="3.6"/><rect x="9.3" y="27.0" width="2.2" height="3.6"/><rect x="9.3" y="34.5" width="2.2" height="3.6"/><rect x="9.3" y="42.0" width="2.2" height="3.6"/><rect x="13.6" y="27.0" width="2.2" height="3.6"/><rect x="13.6" y="34.5" width="2.2" height="3.6"/><rect x="13.6" y="42.0" width="2.2" height="3.6"/><rect x="17.9" y="27.0" width="2.2" height="3.6"/><rect x="17.9" y="34.5" width="2.2" height="3.6"/><rect x="17.9" y="42.0" width="2.2" height="3.6"/><rect x="22.2" y="27.0" width="2.2" height="3.6"/><rect x="22.2" y="34.5" width="2.2" height="3.6"/><rect x="22.2" y="42.0" width="2.2" height="3.6"/></g>
          <!-- statue -->
          <path d="M31 30v-8l2-5 2.500 1 1 5 .5 7z" fill="#2c2f2d"/>
          <path d="M28 30h10l1.500 24H26.500z" fill="#484b48"/>
          <!-- lamp post -->
          <rect x="68.800" y="-2" width="1.200" height="44" fill="#b1b0b2"/>
          <!-- right buildings -->
          <path d="M95.500 27l4-8 5-5 3-10 4-4h60v53H95.500z" fill="#7c766f"/>
          <path d="M108 5h62v2.500h-62zM104 17.500h66v2.500h-66zM100 29.500h70v2.200h-70zM97 41h73v2h-73z" fill="#a8a299"/>
          <g fill="#514c48"><rect x="113.0" y="9.0" width="3.2" height="7"/><rect x="119.2" y="9.0" width="3.2" height="7"/><rect x="125.4" y="9.0" width="3.2" height="7"/><rect x="131.6" y="9.0" width="3.2" height="7"/><rect x="137.8" y="9.0" width="3.2" height="7"/><rect x="144.0" y="9.0" width="3.2" height="7"/><rect x="150.2" y="9.0" width="3.2" height="7"/><rect x="156.4" y="9.0" width="3.2" height="7"/><rect x="162.6" y="9.0" width="3.2" height="7"/><rect x="107.0" y="21.0" width="3.2" height="7"/><rect x="113.2" y="21.0" width="3.2" height="7"/><rect x="119.4" y="21.0" width="3.2" height="7"/><rect x="125.6" y="21.0" width="3.2" height="7"/><rect x="131.8" y="21.0" width="3.2" height="7"/><rect x="138.0" y="21.0" width="3.2" height="7"/><rect x="144.2" y="21.0" width="3.2" height="7"/><rect x="150.4" y="21.0" width="3.2" height="7"/><rect x="156.6" y="21.0" width="3.2" height="7"/><rect x="162.8" y="21.0" width="3.2" height="7"/><rect x="101.0" y="33.0" width="3.2" height="6.5"/><rect x="107.2" y="33.0" width="3.2" height="6.5"/><rect x="113.4" y="33.0" width="3.2" height="6.5"/><rect x="119.6" y="33.0" width="3.2" height="6.5"/><rect x="125.8" y="33.0" width="3.2" height="6.5"/><rect x="132.0" y="33.0" width="3.2" height="6.5"/><rect x="138.2" y="33.0" width="3.2" height="6.5"/><rect x="144.4" y="33.0" width="3.2" height="6.5"/><rect x="150.6" y="33.0" width="3.2" height="6.5"/><rect x="156.8" y="33.0" width="3.2" height="6.5"/><rect x="163.0" y="33.0" width="3.2" height="6.5"/></g>
          <path d="M95.500 27l4-8 5-5v36h-9z" fill="#6a645e"/>
          <rect x="95.500" y="44" width="75" height="10" fill="#4a4644"/>
          <rect x="150" y="7.500" width="10" height="9.500" fill="#3fa65a"/>
          <rect x="160" y="8" width="8" height="8" fill="#e3e3e3"/>
          <!-- road -->
          <rect x="-5" y="50" width="180" height="34" fill="#5b6a62"/>
          <rect x="40" y="52" width="60" height="30" fill="#6d7873"/>
          <rect x="-5" y="80" width="180" height="46" fill="#535554"/>
          <rect x="-5" y="100" width="180" height="26" fill="#4b4d4c"/>
          <!-- crowd right -->
          <path d="M97 54l75-3v52l-32-2-20-22-23-12z" fill="#4b4a45"/>
          <path d="M104 57l66-3v8l-64 4z" fill="#6a5f5a"/>
          <g fill="#3f9d68"><circle cx="108" cy="66" r="3"/><circle cx="118" cy="72" r="3.500"/><circle cx="124" cy="62" r="2.500"/><circle cx="133" cy="70" r="3"/><circle cx="146" cy="64" r="2.500"/><circle cx="152" cy="76" r="3"/><circle cx="162" cy="70" r="2.500"/></g>
          <g fill="#2a2b29"><circle cx="140" cy="78" r="4"/><circle cx="158" cy="86" r="5"/><circle cx="128" cy="80" r="3"/><circle cx="164" cy="60" r="3"/></g>
          <g fill="#b8a59c"><circle cx="112" cy="60" r="1.500"/><circle cx="137" cy="62" r="1.500"/><circle cx="150" cy="69" r="1.500"/><circle cx="160" cy="78" r="1.500"/><circle cx="128" cy="69" r="1.400"/></g>
          <path d="M132 76l4-2 3 6-5 2z" fill="#b8403a"/>
          <!-- teal figures right bottom -->
          <path d="M126 84l10-4 12 6 12 14-4 8-18-4-10-8z" fill="#43ac8e"/>
          <path d="M140 92l14 4 8 10-10 2-12-8z" fill="#3b8fa0"/>
          <!-- crowd left -->
          <path d="M-2 54l30-1 14 4-2 30-42 6z" fill="#3f6f57"/>
          <g fill="#46b57c"><circle cx="4" cy="60" r="3.500"/><circle cx="13" cy="64" r="3"/><circle cx="8" cy="72" r="4"/><circle cx="22" cy="60" r="3"/><circle cx="28" cy="70" r="3.500"/><circle cx="34" cy="62" r="3"/><circle cx="3" cy="82" r="3.500"/><circle cx="14" cy="80" r="3"/></g>
          <g fill="#27302c"><circle cx="18" cy="70" r="2.500"/><circle cx="26" cy="62" r="2"/><circle cx="10" cy="88" r="2.500"/></g>
          <rect x="17.500" y="68" width="5.500" height="20" rx="2" fill="#1f2321"/>
          <!-- flags right of main figure -->
          <path d="M62 52l12-4 12 2 13 4-4 12-14 6-12-2z" fill="#55b585"/>
          <path d="M79 52l18 2-4 14-14 1z" fill="#7fdcab"/>
          <path d="M60 60l10 2 4 12-8 6-8-8z" fill="#3e9a6c"/>
          <!-- main figure -->
          <path d="M41 54l8-3 8 1 6 3 12 1 3 5-12 3-4 4 3 18H40l2-18-12 5-5-4 10-8z" fill="#5fd28c"/>
          <path d="M44 64h16l3 22H41z" fill="#6adb97"/>
          <ellipse cx="51.500" cy="38" rx="8.500" ry="8" fill="#4fa382"/>
          <ellipse cx="51" cy="41" rx="5" ry="5.500" fill="#aab6cf"/>
          <path d="M43.500 47l4-1 1 15-4.500 1zM56 46l4 1 1.500 15-4 .5z" fill="#8f3d28"/>
          <!-- purple -->
          <path d="M82 71l4-2 5 2 1 17-10 1z" fill="#5a35a0"/>
          <!-- foreground marchers -->
          <g fill="#4cc583"><path d="M1 92l6-3 5 4 2 16-6 5-8-4z"/><path d="M24 86l6-3 7 3 3 14-2 18-10 3-4-14z"/><path d="M34 96l6 2 2 18-6 4z"/><path d="M59 90l5-3 5 4-1 12-8 2z"/><path d="M64 96l8-4 7 4 2 16-4 9H66l-3-12z"/><path d="M75 86l5-2 4 6-2 10-6 1z"/><path d="M99 86l6-3 6 4 4 12-3 12-8 3-5-12z"/><path d="M108 96l6 2 1 14-6 2z"/></g>
          <g fill="#2e8f5e"><path d="M28 96l6 2-1 10-6-2z"/><path d="M68 104l8 2-1 10-7-2z"/><path d="M102 92l6 2-1 10-6-2z"/></g>
          <g fill="#2a2f2c"><rect x="6" y="106" width="2.500" height="8"/><rect x="44" y="100" width="2.500" height="7"/><rect x="60" y="86" width="3" height="8"/></g>
          <!-- road lines -->
          <g fill="#c9cac9"><rect x="14" y="94" width="44" height=".9"/><rect x="44" y="102" width="80" height=".9"/><rect x="84" y="96" width="30" height=".8"/></g>
        </g>
        <text x="1.500" y="118.600" font-family="Liberation Sans, sans-serif" font-size="11.700" fill="#e4e4e4" opacity=".85" filter="url(#bl1)" textLength="24" lengthAdjust="spacing">NO</text>
        <text x="90.500" y="118.600" font-family="Liberation Sans, sans-serif" font-size="11.700" fill="#e4e4e4" opacity=".85" filter="url(#bl1)" textLength="72" lengthAdjust="spacing">ENTRY</text>
        </g>
      </svg>

      <!-- photo 2 : Irish dancer -->
      <svg class="a" style="left:0;top:173px" width="167.500" height="141" viewBox="0 0 167.500 141">
        <defs><filter id="bl2" x="-5%" y="-5%" width="110%" height="110%"><feGaussianBlur stdDeviation=".9"/></filter>
        <filter id="bl3" x="-10%" y="-10%" width="120%" height="120%"><feGaussianBlur stdDeviation="2.200"/></filter>
        <clipPath id="c2"><rect width="167.500" height="141"/></clipPath></defs>
        <g clip-path="url(#c2)" id="ph2">
        <g filter="url(#bl3)">
          <rect x="-8" y="-8" width="185" height="160" fill="#223f24"/>
          <rect x="-8" y="-8" width="185" height="28" fill="#1a371e"/>
          <ellipse cx="60" cy="2" rx="22" ry="8" fill="#4f7d49"/>
          <ellipse cx="147" cy="0" rx="13" ry="9" fill="#c3cfc0"/>
          <!-- ground -->
          <rect x="-8" y="100" width="185" height="52" fill="#87827c"/>
          <rect x="-8" y="122" width="185" height="30" fill="#99948d"/>
          <!-- bunting -->
          <rect x="-3.0" y="19.5" width="7.6" height="5.6" fill="#3a9a44"/><rect x="4.6" y="19.1" width="7.6" height="5.6" fill="#e8873a"/><rect x="12.2" y="18.8" width="7.6" height="5.6" fill="#e8873a"/><rect x="19.8" y="18.4" width="7.6" height="5.6" fill="#3a9a44"/><rect x="27.4" y="18.1" width="7.6" height="5.6" fill="#3a9a44"/><rect x="35.0" y="17.8" width="7.6" height="5.6" fill="#e8873a"/><rect x="42.6" y="17.4" width="7.6" height="5.6" fill="#e8873a"/><rect x="50.2" y="17.1" width="7.6" height="5.6" fill="#3a9a44"/><rect x="57.8" y="16.7" width="7.6" height="5.6" fill="#3a9a44"/>
          <rect x="112.0" y="14.5" width="7.6" height="5.6" fill="#3a9a44"/><rect x="119.6" y="13.9" width="7.6" height="5.6" fill="#3a9a44"/><rect x="127.2" y="13.4" width="7.6" height="5.6" fill="#e8c040"/><rect x="134.8" y="12.8" width="7.6" height="5.6" fill="#3a9a44"/><rect x="142.4" y="12.3" width="7.6" height="5.6" fill="#e8873a"/><rect x="150.0" y="11.8" width="7.6" height="5.6" fill="#3a9a44"/><rect x="157.6" y="11.2" width="7.6" height="5.6" fill="#3a9a44"/><rect x="165.2" y="10.6" width="7.6" height="5.6" fill="#3a9a44"/>
          <!-- bg dancer far left -->
          <ellipse cx="11" cy="40" rx="5.500" ry="6.500" fill="#7a5a44"/><ellipse cx="11" cy="43" rx="4" ry="4.500" fill="#dcbca6"/>
          <path d="M1 50h20l3 26H-2z" fill="#dedbd4"/><path d="M5 56h12l2 26H3z" fill="#2c6a39"/>
          <path d="M-3 70l10 2-1 16-10-2z" fill="#e28a3a"/>
          <path d="M-3 92h20l2 24H-4z" fill="#5a3430"/><rect x="1" y="116" width="9" height="26" fill="#161616"/>
          <!-- bg dancer 2 -->
          <ellipse cx="30" cy="43" rx="5" ry="6" fill="#9a7a60"/><ellipse cx="30" cy="46" rx="3.800" ry="4.200" fill="#dcbca6"/>
          <path d="M22 52h17l4 20H20z" fill="#d9d5cd"/>
          <ellipse cx="44" cy="46" rx="4" ry="5" fill="#c9a58e"/>
          <!-- drum -->
          <ellipse cx="42" cy="88" rx="19" ry="21" fill="#ecebe4"/><ellipse cx="43.500" cy="88" rx="15.500" ry="17.500" fill="#2f8f48"/><ellipse cx="49" cy="92" rx="5.500" ry="6.500" fill="#c3e2c6"/>
          <path d="M18 70l8-2 3 24-7 3z" fill="#efeee9"/>
          <path d="M22 96l8 4 4 14-10 2z" fill="#1f4f2a"/>
          <!-- bg dancers right -->
          <ellipse cx="140" cy="38" rx="6" ry="7" fill="#caa68e"/><ellipse cx="140" cy="41" rx="4.500" ry="5" fill="#e6cbb8"/>
          <path d="M129 49h22l5 32h-30z" fill="#e1ddd5"/><path d="M134 56l10 0 6 24h-20z" fill="#2b6536"/><path d="M132 60l8-2 4 20-8 2z" fill="#e0913e"/>
          <path d="M128 80h26l2 22h-30z" fill="#5e4a3f"/><path d="M130 88h24v4h-24z" fill="#2f6a3a"/>
          <rect x="133" y="104" width="6" height="26" fill="#141414"/><rect x="143" y="104" width="6" height="26" fill="#141414"/>
          <ellipse cx="162" cy="44" rx="5" ry="6" fill="#a88a72"/><ellipse cx="162" cy="47" rx="4" ry="4.500" fill="#dcbfaa"/>
          <path d="M153 55h18v40h-16z" fill="#d9d5cc"/><path d="M158 58h14v36h-12z" fill="#3a7040"/><path d="M155 62l6-1 2 22-6 1z" fill="#de8f3c"/>
          <rect x="156" y="95" width="14" height="14" fill="#6a4a3f"/><rect x="158" y="108" width="10" height="30" fill="#222"/>
          <!-- man behind -->
          <path d="M103 58h24l2 80h-28z" fill="#121212"/><path d="M104 44h12l4 16h-18z" fill="#2b7a3c"/>
        </g>
        <g filter="url(#bl2)">
          <!-- legs -->
          <path d="M54 128h10l-1 14h-8zM70 128h22l-2 14H72z" fill="#0f0f0f"/>
          <!-- skirt -->
          <path d="M62 72h42l8 14 10 30c-22 8-66 8-87 0l10-26z" fill="#161009"/>
          <g fill="#c39a48"><path d="M52 86l6-10 5 1-4 26-10 2zM64 80l8-2 1 24-10 3zM76 82h7l1 22h-9zM86 78l9 1 3 24-10 1zM98 78l6 3 8 22-8 2z"/></g>
          <g fill="#161009"><rect x="66.500" y="86" width="3" height="9"/><rect x="78" y="88" width="3" height="9"/><rect x="90" y="85" width="3" height="10"/><rect x="101" y="87" width="3" height="9"/><rect x="54" y="90" width="2.500" height="8"/></g>
          <g fill="#d9b060"><circle cx="68" cy="84" r="1.200"/><circle cx="79.500" cy="86" r="1.200"/><circle cx="91.500" cy="83" r="1.200"/><circle cx="102.500" cy="85" r="1.200"/></g>
          <path d="M38 106c22 7 60 7 82 0l1 3.500c-24 7-62 7-85 0z" fill="#d5a440"/>
          <path d="M37 109.500c24 7 62 7 85 0l1 3.500c-26 7-64 7-87 0z" fill="#2f7a3a"/>
          <path d="M36 113c24 7 64 7 87 0l1 3c-26 7-66 7-89 0z" fill="#d5a440"/>
          <path d="M35 116c26 8 66 8 89 0l2 9c-28 9-68 9-93 0z" fill="#d21e2a"/>
          <path d="M34 122c26 8 68 8 92 0l0 4c-28 8-66 8-92 0z" fill="#a8141e"/>
          <!-- belt -->
          <path d="M63 60h40l1 9H62z" fill="#c9a04a"/><path d="M63 63h40v3H63z" fill="#1c4f2c"/>
          <!-- front panel -->
          <path d="M61 69h44l-10 10-17 8-12-8z" fill="#1f5a30"/>
          <path d="M70 70h11l-1 13-5 3-5-3z" fill="#d0b067"/>
          <!-- torso -->
          <path d="M65 12l10-6h22l10 6-3 48H64z" fill="#1e5a30"/>
          <path d="M94 26l10 2-1 30-10 2z" fill="#e38a32"/>
          <g fill="#d9c28a"><circle cx="77" cy="44" r="1"/><circle cx="77" cy="51" r="1"/><circle cx="77" cy="57" r="1"/></g>
          <!-- sleeves -->
          <path d="M65 12l-8 8-10 20 9 10 12-14 2-20z" fill="#ea8a30"/>
          <path d="M47 40l9 10-16 12-6-7z" fill="#236a37"/>
          <ellipse cx="29.500" cy="60.500" rx="5.500" ry="6" fill="#efc9b2"/>
          <path d="M107 12l10 8 5 14-7 14-10-10-1-22z" fill="#ea8a30"/>
          <path d="M115 36l8-1 1 12-8 2z" fill="#3fa34c"/>
          <path d="M116 46l10-3 11 8-2 6-12 2-8-6z" fill="#f0ceba"/>
          <!-- collar -->
          <path d="M68 8l10 0 8 4 8-4 10 0 3 14-10 8-11 2-11-2-10-8z" fill="#e6e4dc"/>
          <path d="M77 10l9 5 9-5 2 8-11 8-11-8z" fill="#2a6a3c"/>
          <path d="M74 24h12l-1 10-5 5-5-5z" fill="#cdb274"/>
          <path d="M80 -2h14l1 8-8 6-8-6z" fill="#e6c0a6"/>
          <path d="M84 8l8-4 2 2-8 6z" fill="#d98a3a"/>
        </g></g>
      </svg>
      <!-- white text area -->
      <div class="a" style="left:167.400px;top:20.800px;width:400px;height:294px;background:#fdfcfb"></div>
      <div class="a" style="left:157px;top:0;width:410px;height:20.800px;background:#fdfcfb"></div>
      <div class="a" style="left:157px;top:141.700px;width:20px;height:31.600px;background:#fdfcfb"></div>
      <div class="t" style="left:205.100px;top:15.700px;font-size:6px;font-weight:bold;color:#1b1e6b;-webkit-text-stroke:.3px #1b1e6b;transform:scaleX(1.33);transform-origin:0 50%">2.1. ІСТОРИКО-КУЛЬТУРНА СПАДЩИНА (МОВА, ТРАДИЦІЇ, СИМВОЛИ)</div>
      <div class="t" style="left:518.600px;top:25.900px;font-size:9px;font-weight:bold;color:#1b1e6b;-webkit-text-stroke:.4px #1b1e6b;transform:scaleX(1.1);transform-origin:0 50%">6</div>
      <div class="ln" style="top:24.50px">Ірландська культура є однією з найдавніших і найбагатших у Європі, сформована під впливом кельтської,</div>
      <div class="ln" style="top:32.91px">християнської та англо-британської традицій.</div>
      <div class="ln" style="top:41.32px"><b>Мова:</b></div>
      <div class="ln bl" style="top:49.73px">Ірландська (гаельська) мова — перша державна мова, англійська — друга й фактично домінує в</div>
      <div class="ln cl" style="top:58.14px">повсякденному житті.</div>
      <div class="ln bl" style="top:66.55px">Ірландська належить до гойдельської гілки кельтських мов і є однією з найстаріших писемних мов Європи.</div>
      <div class="ln bl" style="top:74.96px">Збереження мови — важлива частина державної політики (навчання в школах, вивіски), особливо в</div>
      <div class="ln cl" style="top:83.37px">традиційно ірландськомовних регіонах .</div>
      <div class="ln bl" style="top:91.78px">Відродження мови є символом опору колоніальному минулому та ключовим елементом національної</div>
      <div class="ln cl" style="top:100.19px">ідентичності.</div>
      <div class="ln" style="top:108.60px"><b>Фольклор і традиції:</b></div>
      <div class="ln bl" style="top:117.01px">Багата міфологія (, Кухулін, Фінн Маккул), епічні саги («Ульстерський цикл», «Фенніанський цикл»).</div>
      <div class="ln bl" style="top:125.42px">Усна поезія та старовинні балади, передані в народних піснях.</div>
      <div class="ln bl" style="top:133.83px">Традиційні ірландські танці (ріл, джиг, сет-данси), що виконуються у спеціальних костюмах і стали</div>
      <div class="ln cl" style="top:142.24px">популярними в усьому світі завдяки шоу «Riverdance».</div>
      <div class="ln bl" style="top:150.65px">Народні інструменти — (барабан), (ірландські волинки), скрипка, флейта, арфа.</div>
      <div class="ln" style="top:159.06px"><b>Релігійна та художня спадщина:</b></div>
      <div class="ln bl" style="top:167.47px">Християнізація Ірландії у V ст. (Святий Патрік) принесла розквіт монастирів і освіти; Ірландію називали</div>
      <div class="ln cl" style="top:175.88px">«островом святих і вчених».</div>
      <div class="ln bl" style="top:184.29px">Збереглися унікальні середньовічні рукописи (зокрема «Книга з Келлса»), монастирі , кам’яні круглі вежі та</div>
      <div class="ln cl" style="top:192.70px">високі хрести.</div>
      <div class="ln bl" style="top:201.11px">Архітектура міст поєднує середньовічні замки (Дублінський, Бларні, ), георгіанські квартали, вікторіанські</div>
      <div class="ln cl" style="top:209.52px">будівлі й сучасні скляні центри.</div>
      <div class="ln" style="top:217.93px"><b>Національні символи:</b></div>
      <div class="ln bl" style="top:226.34px">Арфа — офіційний символ Ірландії (на гербі, печатках, євро-монетах).</div>
      <div class="ln bl" style="top:234.75px">Конюшина (шамрок) — символ Святого Патріка і неофіційний знак ірландської ідентичності.</div>
      <div class="ln bl" style="top:243.16px">Зелений колір і триколор (зелено-біло-оранжевий прапор), де зелений символізує католиків, оранжевий —</div>
      <div class="ln cl" style="top:251.57px">протестантів, а білий — мир між ними.</div>
      <div class="ln" style="top:259.98px"><b>Свята та обряди:</b></div>
      <div class="ln bl" style="top:268.39px">День Святого Патріка (17 березня) — головне національне свято, символізує культурну єдність і широко</div>
      <div class="ln cl" style="top:276.80px">відзначається у світі.</div>
      <div class="ln bl" style="top:285.21px">Традиційні ірландські весілля, музичні вечори (céilí), святкування Белтейну (весняне свято кельтського</div>
      <div class="ln cl" style="top:293.62px">походження).</div>
    </div>

    <!-- status bar -->
    <div class="a" style="left:0;top:418px;width:868px;height:16px;background:#f3f3f3"></div>
    <span class="t st" style="left:15px">Слайд 6 из 17</span>
    <span class="t st" style="left:70.500px">Русский</span>
    <span class="t st" style="left:427.700px">Отправить отзыв в корпорацию Майкрософт</span>
    <svg class="a" style="left:582.500px;top:423.500px" width="8" height="8" viewBox="0 0 8 8"><path d="M.5.500h7v4.500L5 7.500H.5zM7.500 5H5v2.500" fill="none" stroke="#444" stroke-width=".8"/></svg>
    <span class="t st" style="left:593px">Заметки</span>
    <div class="a" style="left:623.600px;top:420px;width:24.400px;height:13px;background:#e2e2e2;border:1px solid #c4c4c4;border-radius:2px"></div>
    <svg class="a" style="left:631px;top:423px" width="9" height="8" viewBox="0 0 9 8"><rect x=".5" y=".5" width="8" height="7" rx=".8" fill="none" stroke="#444" stroke-width=".8"/><path d="M3 .5v7M3 3h5.500" stroke="#444" stroke-width=".7"/></svg>
    <svg class="a" style="left:655.500px;top:423px" width="9" height="8" viewBox="0 0 9 8"><rect x=".5" y=".5" width="3" height="2.800" fill="none" stroke="#555" stroke-width=".7"/><rect x="5.500" y=".5" width="3" height="2.800" fill="none" stroke="#555" stroke-width=".7"/><rect x=".5" y="4.700" width="3" height="2.800" fill="none" stroke="#555" stroke-width=".7"/><rect x="5.500" y="4.700" width="3" height="2.800" fill="none" stroke="#555" stroke-width=".7"/></svg>
    <svg class="a" style="left:679.500px;top:422.500px" width="9" height="9" viewBox="0 0 9 9"><path d="M.5.800h8M1.200.8v3.600a.6.600 0 0 0 .6.600h5.400a.6.600 0 0 0 .6-.6V.8M4.500 5v2.200M2.800 8.300l1.700-1.300 1.700 1.300" fill="none" stroke="#555" stroke-width=".8"/></svg>
    <div class="a" style="left:705px;top:427.200px;width:6px;height:1px;background:#555"></div>
    <div class="a" style="left:725.500px;top:427.200px;width:62.500px;height:1px;background:#8a8a8a"></div>
    <div class="a" style="left:733px;top:425px;width:5.400px;height:5.400px;border-radius:50%;background:#c5332a"></div>
    <div class="a" style="left:801.500px;top:427.200px;width:7px;height:1px;background:#555"></div>
    <div class="a" style="left:804.500px;top:424.200px;width:1px;height:7px;background:#555"></div>
    <span class="t st" style="left:819.700px;color:#555">73%</span>
    <svg class="a" style="left:844.500px;top:423.500px" width="9" height="9" viewBox="0 0 9 9"><path d="M4.500.4v8.200M.4 4.500h8.200M3.300 1.600L4.500.4l1.200 1.200M3.300 7.400l1.200 1.200 1.200-1.200M1.600 3.300L.4 4.500l1.200 1.200M7.400 3.300l1.200 1.200-1.200 1.200" fill="none" stroke="#666" stroke-width=".7"/></svg>
  </div>

  <!-- ===== desktop + dock ===== -->
  <div id="desk" class="a">
    <div class="a" style="left:30px;top:5px;width:813px;height:39px;border-radius:9px;background:rgba(255,255,255,.07);border:.5px solid rgba(255,255,255,.12)"></div>
    <div class="di" style="left:29.0px;background:#2f6f8a;"></div>
    <div class="di" style="left:58.3px;background:#6a5f55;"></div>
    <div class="di" style="left:87.6px;background:#3fae4f;"></div>
    <div class="di" style="left:116.9px;background:linear-gradient(#3a66c8 50%,#e8c83a 50%);"></div>
    <div class="di" style="left:146.2px;background:#2a6a7a;"></div>
    <div class="di" style="left:175.5px;background:#c8433a;"></div>
    <div class="di" style="left:204.8px;background:#b8a23a;"></div>
    <div class="di" style="left:234.1px;background:#3a58c8;"></div>
    <div class="di" style="left:263.4px;background:#3a8a9a;"></div>
    <div class="di" style="left:292.7px;background:#4a3a9a;"></div>
    <div class="di" style="left:322.0px;background:#9a9a9a;"></div>
    <div class="di" style="left:352.3px;background:#fbfbfb;"><i class="a" style="left:3.500px;top:5px;width:3px;height:3px;border-radius:50%;background:#4a7be8;box-shadow:0 5px #e5554a,0 10px #f0a23a"></i><i class="a" style="left:8.500px;top:6px;width:10px;height:1px;background:#d0d0d0;box-shadow:0 5px #d0d0d0,0 10px #d0d0d0"></i></div>
    <div class="di" style="left:381.0px;background:#fbfaf4;overflow:hidden"><i class="a" style="left:0;top:0;width:22px;height:6.500px;background:#f6cf4e"></i></div>
    <div class="di" style="left:410.7px;background:#f7f7f7;"><svg class="a" style="left:2px;top:3px" width="18" height="16" viewBox="0 0 18 16"><circle cx="6" cy="10" r="5" fill="#e2574a"/><rect x="8" y="2" width="9" height="9" fill="#39b6c8"/><path d="M1 12c3-8 5-8 6-2s3 4 4-2 3-4 6 0" fill="none" stroke="#2b3f9e" stroke-width="1.600"/></svg></div>
    <div class="di" style="left:439.7px;background:#161616;"><span class="t" style="left:10.500px;top:6.200px;font-size:9px;font-weight:bold;color:#fff">tv</span><svg class="a" style="left:3px;top:5.500px" width="7" height="9" viewBox="0 0 18 20"><path d="M12.600 3.200c.8-1 1.300-2.300 1.200-3.200-1.100.1-2.500.8-3.300 1.700-.7.800-1.400 2.100-1.200 3.300 1.300.1 2.500-.7 3.300-1.800zM15 10.600c0-2.300 1.900-3.400 2-3.500-1.100-1.600-2.800-1.800-3.400-1.800-1.400-.2-2.800.8-3.500.8-.8 0-1.900-.8-3.100-.8-1.600 0-3.100.9-3.900 2.400-1.700 2.900-.4 7.200 1.200 9.500.8 1.200 1.700 2.500 3 2.400 1.200 0 1.700-.8 3.100-.8 1.500 0 1.900.8 3.100.7 1.300 0 2.100-1.100 2.900-2.300.9-1.300 1.300-2.600 1.300-2.700-.1 0-2.600-1-2.700-3.900z" fill="#fff"/></svg></div>
    <div class="di" style="left:469.5px;background:#8b8d90;overflow:visible"><i class="a" style="left:3px;top:3px;width:16px;height:16px;border-radius:50%;border:2.500px solid #4a4a4c"></i><i class="a" style="left:8px;top:8px;width:6px;height:6px;border-radius:50%;background:#4a4a4c"></i><i class="a" style="left:15px;top:-2.500px;width:9px;height:9px;border-radius:50%;background:#e8443a"></i><span class="t" style="left:18px;top:-.5px;font-size:5.500px;color:#fff">1</span></div>
    <div class="di" style="left:498.7px;background:linear-gradient(#f4506a,#e8283f);"><svg class="a" style="left:5.500px;top:4.500px" width="11" height="13" viewBox="0 0 11 13"><path d="M3.500 2.500L10 1v8.200M3.500 2.500v8" fill="none" stroke="#fff" stroke-width="1.500"/><ellipse cx="2.300" cy="10.700" rx="2.100" ry="1.700" fill="#fff"/><ellipse cx="8.800" cy="9.400" rx="2.100" ry="1.700" fill="#fff"/></svg></div>
    <div class="di" style="left:527.6px;background:linear-gradient(#3aa0ee,#1f6fd8);"><svg class="a" style="left:3.500px;top:4px" width="15" height="14" viewBox="0 0 15 14"><path d="M7.500 1.500L2.800 11.500M6 1.500l5.800 10M.8 8.500h13.400" fill="none" stroke="#fff" stroke-width="1.700" stroke-linecap="round"/></svg></div>
    <div class="di" style="left:557.4px;background:linear-gradient(#f8ab52,#f08a2c);"><svg class="a" style="left:3px;top:3px" width="16" height="16" viewBox="0 0 16 16"><path d="M3 14L12.500 2.500l1.500 1.200L4.600 15z" fill="#fff"/><path d="M2 13.500h9" stroke="#ffe6c4" stroke-width="1"/></svg></div>
    <div class="a" style="left:589px;top:10px;width:1px;height:30px;background:rgba(255,255,255,.22)"></div>
    <div class="di" style="left:599.3px;background:#f4f4f8;"><i class="a" style="left:5px;top:6.500px;width:9px;height:9.500px;border-radius:1.500px;background:#4b53bc"></i><span class="t" style="left:7.300px;top:8px;font-size:6.500px;font-weight:bold;color:#fff">T</span><i class="a" style="left:13px;top:4.500px;width:4.500px;height:4.500px;border-radius:50%;background:#5d66d2"></i><i class="a" style="left:12px;top:9.500px;width:6.500px;height:7px;border-radius:1px 1px 3px 3px;background:#6d76dc"></i></div>
    <div class="di" style="left:628.8px;background:#f6f6f6;"><i class="a" style="left:7px;top:3.500px;width:11.500px;height:15px;border-radius:1.500px;background:linear-gradient(#3f8ee0,#1f5fc0 50%,#174a9c)"></i><i class="a" style="left:3.500px;top:6.500px;width:9px;height:9px;border-radius:1.300px;background:#1d56b0"></i><span class="t" style="left:4.800px;top:8px;font-size:6px;font-weight:bold;color:#fff">W</span></div>
    <div class="di" style="left:658.3px;background:linear-gradient(#6be27c,#34c24c);"><i class="a" style="left:4px;top:7px;width:9.500px;height:8px;border-radius:2px;background:#fff"></i><i class="a" style="left:13.500px;top:7.500px;border-right:4.500px solid #fff;border-top:3.500px solid transparent;border-bottom:3.500px solid transparent"></i></div>
    <div class="di" style="left:687.5px;background:#fbfaf4;overflow:visible"><i class="a" style="left:0;top:0;width:22px;height:6.500px;background:#f6cf4e;border-radius:5px 5px 0 0"></i><i class="a" style="left:15.500px;top:-2.500px;width:8px;height:8px;border-radius:50%;background:#2b2b2b;border:.6px solid #c9c9c9"></i><i class="a" style="left:18px;top:-.5px;width:3px;height:4px;border-radius:.5px;background:#ddd"></i></div>
    <div class="a" style="left:719.500px;top:10px;width:1px;height:30px;background:rgba(255,255,255,.22)"></div>
    <div class="a" style="left:728px;top:15px;width:24.500px;height:14px;background:#161616;border-radius:1px"></div>
    <div class="a" style="left:758.500px;top:14.500px;width:24px;height:14.500px;background:#1b1b1b;border-radius:1px"></div><div class="a" style="left:761px;top:17px;width:14px;height:2px;background:#9a8a6a"></div><div class="a" style="left:768px;top:22px;width:2px;height:2px;background:#c8a84a"></div>
    <div class="a" style="left:794.500px;top:10px;width:9.500px;height:24px;background:#1a1a1a;border-radius:1px"></div><div class="a" style="left:798px;top:15px;width:2px;height:2px;border-radius:50%;background:#b8433a;box-shadow:0 9px #b8433a"></div>
    <div class="a" style="left:745.5px;top:25.500px;width:8.500px;height:8.500px;border-radius:2px;background:#dfe1f2"></div><div class="a" style="left:747.5px;top:27.500px;width:4.500px;height:4.500px;border-radius:50%;background:#5b5fc7"></div>
    <div class="a" style="left:774.5px;top:25.500px;width:8.500px;height:8.500px;border-radius:2px;background:#dfe1f2"></div><div class="a" style="left:776.5px;top:27.500px;width:4.500px;height:4.500px;border-radius:50%;background:#5b5fc7"></div>
    <div class="a" style="left:804px;top:25.500px;width:8.500px;height:8.500px;border-radius:2px;background:#dfe1f2"></div><div class="a" style="left:806px;top:27.500px;width:4.500px;height:4.500px;border-radius:50%;background:#5b5fc7"></div>
    <svg class="a" style="left:819.500px;top:8.500px" width="19" height="26" viewBox="0 0 19 26"><defs><linearGradient id="tg" x1="0" x2="1"><stop offset="0" stop-color="#7d8485"/><stop offset=".5" stop-color="#aab0b1"/><stop offset="1" stop-color="#737a7b"/></linearGradient></defs><path d="M1.500 4h16l-2 21a1 1 0 0 1-1 1h-10a1 1 0 0 1-1-1z" fill="url(#tg)" opacity=".92"/><ellipse cx="9.500" cy="3.800" rx="8.300" ry="2.600" fill="#8e9596" stroke="#c3c8c9" stroke-width=".8"/><path d="M5 8l1 15M9.500 8v15M14 8l-1 15" stroke="#6a7071" stroke-width=".8"/></svg>
    <div class="a" style="left:508.7px;top:38.500px;width:2px;height:2px;border-radius:50%;background:#cfd8d4"></div>
    <div class="a" style="left:609.3px;top:38.500px;width:2px;height:2px;border-radius:50%;background:#cfd8d4"></div>
    <div class="a" style="left:638.8px;top:38.500px;width:2px;height:2px;border-radius:50%;background:#cfd8d4"></div>
  </div>
</div>

<!-- ================= PARTICIPANT PANEL ================= -->
<div id="panel">
  <div class="a" style="left:878px;top:0;width:157px;height:590px;background:#1b1b1b"></div>
  <div class="tile" style="top:-6px;height:119.500px"></div>
  <div class="tile" style="top:116px;height:149px"></div>
  <div class="tile" style="top:268.400px;height:151px"></div>
  <div class="tile" style="top:423px;height:148px;background:#282a35"></div>
  <div class="tile" style="top:576.400px;height:30px"></div>

  <!-- avatar 1 -->
  <svg class="a" style="left:927.700px;top:31.800px" width="49" height="49" viewBox="0 0 49 49"><defs><filter id="ba1"><feGaussianBlur stdDeviation="1"/></filter><clipPath id="ca1"><circle cx="24.500" cy="24.500" r="24.400"/></clipPath></defs><g clip-path="url(#ca1)"><rect width="49" height="49" fill="#121212"/><g filter="url(#ba1)"><path d="M-2 -2h20l-4 18H-2z" fill="#1b2a30"/><rect x="-2" y="14.500" width="16" height="2.500" fill="#5a5e60"/><rect x="36" y="14.500" width="15" height="2.500" fill="#3c3e40"/><path d="M19 4c3-3 8-3 9 1l-1 8-6 2-3-5z" fill="#2a1c16"/><ellipse cx="26.500" cy="6.500" rx="2.500" ry="3" fill="#9a6e58"/><ellipse cx="21" cy="15.500" rx="4.200" ry="5" fill="#c3a08c"/><path d="M17 18l3 2L6 30l-3-2z" fill="#8e6a58"/><path d="M24 17l4-1 16 22-3 3z" fill="#80604f"/><path d="M17 21l10-2 6 12-2 14-14 2z" fill="#0c0c0c"/></g></g></svg>

  <!-- avatar 2 -->
  <svg class="a" style="left:921.200px;top:160.400px" width="63.400" height="63.400" viewBox="0 0 63.400 63.400"><defs><filter id="ba2"><feGaussianBlur stdDeviation=".9"/></filter><clipPath id="ca2"><circle cx="31.700" cy="31.700" r="31.600"/></clipPath></defs><g clip-path="url(#ca2)"><rect width="64" height="64" fill="#19191b"/><g filter="url(#ba2)"><path d="M-2 34l6-22 14-10 10-2-14 36-10 8z" fill="#dcdcde"/><path d="M-2 40l12-6 2 10-8 6z" fill="#b9b9bc"/><path d="M24 2l8-1 4 6-8 14-4 20 2 22H2l4-16 8-22z" fill="#101012"/><path d="M44 2l10 4 8 12 2 14-10-4-8-14z" fill="#c8202c"/><path d="M56 20l6 2 1 12-7-2z" fill="#e8e8ea"/><path d="M57 26l5 1 0 5-5-1z" fill="#2f8a4a"/><path d="M44 24l12 4 6 8v30H42l4-20z" fill="#121214"/><path d="M26 6l14-3 8 5 0 6-20 1z" fill="#2a3580"/><g fill="#e8e8f4"><circle cx="31" cy="8" r="1"/><circle cx="37" cy="6.500" r="1"/><circle cx="43" cy="9" r="1"/></g><ellipse cx="35" cy="21" rx="8.500" ry="9" fill="#ebe3e0"/><path d="M27 13.500h16v4H27z" fill="#cf2a30"/><path d="M33 13h3.500v15H33z" fill="#cf2a30"/><path d="M25 32l10-2 12 3 2 30H22z" fill="#e3e3e6"/><path d="M33 32h6l1 16h-8z" fill="#27337f"/><path d="M29 52h17l0 8H28z" fill="#232c6e"/><path d="M16 44l8-2 2 20-14 2z" fill="#3a3a3e"/></g></g></svg>
  <div class="a" style="left:882.600px;top:232px;width:140.900px;height:27.800px;background:#1b1b1b;border-radius:2px"></div>
  <span class="nm" style="left:889.800px;top:239px;letter-spacing:.84px">Дмитрашк...</span>
  <svg class="a" style="left:1000.500px;top:239px" width="14.500" height="14.500" viewBox="0 0 16 16"><rect x="5.400" y="1" width="5.200" height="8.800" rx="2.600" fill="#dcdcdc"/><path d="M3 7.200v.7a5 5 0 0 0 10 0v-.7M8 12.900v2.300" fill="none" stroke="#dcdcdc" stroke-width="1.300" stroke-linecap="round"/><path d="M1.200 1.800l13.300 13" stroke="#1b1b1b" stroke-width="3"/><path d="M1.500 1.500l13.300 13" stroke="#dcdcdc" stroke-width="1.300" stroke-linecap="round"/></svg>

  <!-- avatar 3 -->
  <svg class="a" style="left:921.900px;top:313.300px" width="62.800" height="62.800" viewBox="0 0 62.800 62.800"><defs><filter id="ba3"><feGaussianBlur stdDeviation="1.400"/></filter><clipPath id="ca3"><circle cx="31.400" cy="31.400" r="31.300"/></clipPath></defs><g clip-path="url(#ca3)"><rect width="63" height="63" fill="#1b1917"/><g filter="url(#ba3)"><path d="M12 30c0-18 10-27 22-25s20 12 18 30l-2 30H12z" fill="#3a2a20"/><path d="M18 8c6-6 20-8 28 2l-6 8-16 0z" fill="#2c231e"/><path d="M8 44c2-10 6-16 12-20l6 40H6z" fill="#5e3a26"/><path d="M44 30l8 6 2 16-8 12-4-14z" fill="#6a4228"/><ellipse cx="35.500" cy="32" rx="10.500" ry="16" fill="#b79a8c"/><ellipse cx="36" cy="24" rx="8" ry="6" fill="#c9b5a9"/><path d="M24 22c2-8 10-12 20-6l4 10-6-6-10-1-6 12z" fill="#33261f"/><path d="M22 30l4-6 0 22-2 14-6 0z" fill="#5a3826"/><path d="M29 29h5.500v1.800H29zM39 30h5.500v1.800H39z" fill="#3e2e2a"/><path d="M33 43h7v2.500h-7z" fill="#a87470"/><path d="M10 56l14-6 10 4 12-2 8 6v8H8z" fill="#191716"/></g></g></svg>
  <span class="nm" style="left:890.400px;top:392.100px;letter-spacing:.67px">Пештерєва...</span>
  <svg class="a" style="left:1000.500px;top:392.5px" width="14.500" height="14.500" viewBox="0 0 16 16"><rect x="5.400" y="1" width="5.200" height="8.800" rx="2.600" fill="#dcdcdc"/><path d="M3 7.200v.7a5 5 0 0 0 10 0v-.7M8 12.900v2.300" fill="none" stroke="#dcdcdc" stroke-width="1.300" stroke-linecap="round"/><path d="M1.200 1.800l13.300 13" stroke="#1b1b1b" stroke-width="3"/><path d="M1.500 1.500l13.300 13" stroke="#dcdcdc" stroke-width="1.300" stroke-linecap="round"/></svg>

  <!-- avatar 4 (active speaker) -->
  <div class="a" style="left:908px;top:454.300px;width:90px;height:90px;border-radius:50%;background:#7478cc"></div>
  <svg class="a" style="left:917px;top:463.300px" width="72" height="72" viewBox="0 0 74 74"><defs><filter id="ba4"><feGaussianBlur stdDeviation="1.400"/></filter><clipPath id="ca4"><circle cx="37" cy="37" r="35.200"/></clipPath></defs><circle cx="37" cy="37" r="37" fill="#2c2e5e"/><g clip-path="url(#ca4)"><rect width="74" height="74" fill="#161618"/><g filter="url(#ba4)"><path d="M4 18l14-4 6 6-2 28-20 6z" fill="#44464a"/><path d="M50 4l26 8v36l-18-6-6-20z" fill="#1e2024"/><path d="M56 28l20-4v20l-16 2z" fill="#0c0c0d"/><path d="M21 24c0-16 8-22 18-21s16 8 16 22l4 50H14z" fill="#a48d6c"/><path d="M19 32c-2 12-4 28-8 44h16z" fill="#c9b38f"/><ellipse cx="37" cy="29" rx="12" ry="17" fill="#dbbbaa"/><path d="M25 22c2-10 8-15 16-13s9 7 9 14l-6-8-11 1z" fill="#9c8464"/><path d="M48 24l5 6 3 30-8 4z" fill="#b09a78"/><path d="M31 46l14 2 8 28H24z" fill="#1b1a1a"/><path d="M33 44h9l-2 9h-5z" fill="#d6b2a0"/><path d="M30 26h6v2h-6zM40 26h6v2h-6z" fill="#5a463e"/><path d="M34 39h7.500v2.600H34z" fill="#c07e7c"/><path d="M54 46l14 4 6 24H54z" fill="#c88fb8"/><path d="M8 54l14-6 6 28H6z" fill="#d3c09a"/></g></g></svg>
  <div class="a" style="left:882.600px;top:539.500px;width:141.600px;height:28.300px;background:#1b1b1b;border-radius:2px"></div>
  <span class="nm" style="left:890.700px;top:545.500px;letter-spacing:.6px">Івахненко Ан...</span>
</div>

<!-- presenter name label -->
<div class="a" style="left:23.300px;top:528.600px;width:329.200px;height:46.400px;border-radius:5px;background:rgba(24,24,24,.93)"></div>
<span class="nm" style="left:37.900px;top:544px;letter-spacing:.82px;color:#f0f0f0">Івахненко Анастасія Дмитрівна</span>
<div class="a" style="left:317.500px;top:549.500px;width:4.200px;height:4.200px;border-radius:50%;background:#f2f2f2;box-shadow:6.600px 0 #f2f2f2,13.200px 0 #f2f2f2"></div>

</body>
</html>
